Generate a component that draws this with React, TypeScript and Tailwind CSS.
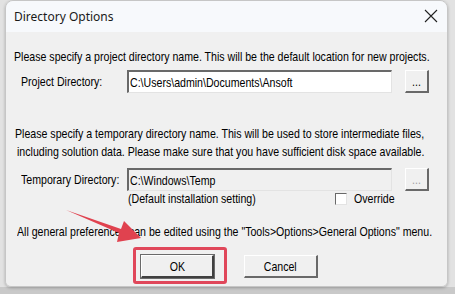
const ui = { fontFamily: '"Liberation Sans", Arial, sans-serif' };

// the dialog font is a narrow bitmap face; squeeze Arial to its width
const T = ({ children, center }: { children: React.ReactNode; center?: boolean }) => (
  <span className={`inline-block whitespace-nowrap scale-x-[0.815] ${center ? "origin-center" : "origin-left"}`}>
    {children}
  </span>
);

const Sunken = ({ value, disabled }: { value: string; disabled?: boolean }) => (
  <div
    className={`w-[265px] h-[23px] border-t-2 border-l-2 border-b border-r border-t-[#696969] border-l-[#696969] border-b-[#e3e3e3] border-r-[#e3e3e3] px-[1px] flex items-center text-[13px] text-black overflow-hidden ${
      disabled ? "bg-[#f0f0f0]" : "bg-white"
    }`}
  >
    <T>{value}</T>
  </div>
);

const Raised = ({
  label,
  w,
  disabled,
  strong,
}: {
  label: string;
  w: string;
  disabled?: boolean;
  strong?: boolean;
}) => (
  <div
    className={`${w} h-[23px] flex items-center justify-center border-t border-l border-t-white border-l-white border-b-2 border-r-2 ${
      strong ? "border-b-[#404040] border-r-[#404040] outline outline-1 outline-[#6a6a6a]" : "border-b-[#696969] border-r-[#696969]"
    } bg-[#f0f0f0] text-[13px] ${disabled ? "text-[#a0a0a0]" : "text-black"}`}
  >
    <T center>{label}</T>
  </div>
);

export default function App() {
  return (
    <div className="relative w-[455px] h-[294px] bg-[#e2e2e2] overflow-hidden" style={ui}>
      <div className="absolute left-0 right-0 bottom-0 h-[7px] bg-[#c9c9c9]" />
      <div className="relative ml-[5px] w-[443px] h-[287px] flex flex-col rounded-t-[8px] rounded-b-[6px] border border-[#c6c6c6] overflow-hidden shadow-[0_1px_3px_rgba(0,0,0,0.25)]">
        <div className="h-[31px] shrink-0 bg-[#f7f9fc] flex items-center justify-between pl-[8px] pr-[9px]">
          <span className="text-[12px] text-[#1a1a1a] pt-[1px]" style={{ fontFamily: '"Noto Sans", "Open Sans", sans-serif' }}>
            Directory Options
          </span>
          <svg width="14" height="14" viewBox="0 0 14 14" className="mb-[2px]">
            <path d="M1 1 L13 13 M13 1 L1 13" stroke="#222" strokeWidth="1.1" fill="none" />
          </svg>
        </div>
        <div className="flex-1 bg-[#f0f0f0] flex flex-col text-[13px] text-black leading-none">
          <div className="mt-[16px] ml-[8px] h-[16px] flex items-center">
            <T>Please specify a project directory name. This will be the default location for new projects.</T>
          </div>
          <div className="mt-[6px] flex items-center h-[23px]">
            <div className="ml-[15px] w-[106px]">
              <T>Project Directory:</T>
            </div>
            <Sunken value="C:\Users\admin\Documents\Ansoft" />
            <div className="ml-[13px]">
              <Raised label="..." w="w-[24px]" />
            </div>
          </div>
          <div className="mt-[31px] ml-[9px] flex flex-col">
            <div className="h-[18px] flex items-center">
              <T>Please specify a temporary directory name. This will be used to store intermediate files,</T>
            </div>
            <div className="h-[18px] flex items-center ml-[2px]">
              <T>including solution data. Please make sure that you have sufficient disk space available.</T>
            </div>
          </div>
          <div className="mt-[8px] flex items-center h-[23px]">
            <div className="ml-[15px] w-[106px]">
              <T>Temporary Directory:</T>
            </div>
            <Sunken value="C:\Windows\Temp" disabled />
            <div className="ml-[13px]">
              <Raised label="..." w="w-[24px]" disabled />
            </div>
          </div>
          <div className="flex items-center h-[15px]">
            <div className="ml-[122px] w-[207px]">
              <T>(Default installation setting)</T>
            </div>
            <div className="w-[12px] h-[12px] bg-white border-t border-l border-t-[#696969] border-l-[#696969] border-b border-r border-b-[#e3e3e3] border-r-[#e3e3e3]" />
            <div className="ml-[7px]">
              <T>Override</T>
            </div>
          </div>
          <div className="mt-[17px] ml-[11px] h-[16px] flex items-center">
            <T>All general preferences can be edited using the "Tools&gt;Options&gt;General Options" menu.</T>
          </div>
          <div className="mt-[16px] flex items-center">
            <div className="ml-[135px]">
              <Raised label="OK" w="w-[73px]" strong />
            </div>
            <div className="ml-[30px]">
              <Raised label="Cancel" w="w-[74px]" />
            </div>
          </div>
        </div>
      </div>

      {/* annotation: red box + arrow */}
      <div className="absolute left-[133px] top-[247px] w-[94px] h-[37px] border-[3px] border-[#e0475a] rounded-[3px]" />
      <svg className="absolute left-0 top-0" width="455" height="294" viewBox="0 0 455 294">
        <polygon points="66,210 121,229 124,221 141,238 117,242 119,233" fill="#e0424f" />
      </svg>
    </div>
  );
}
